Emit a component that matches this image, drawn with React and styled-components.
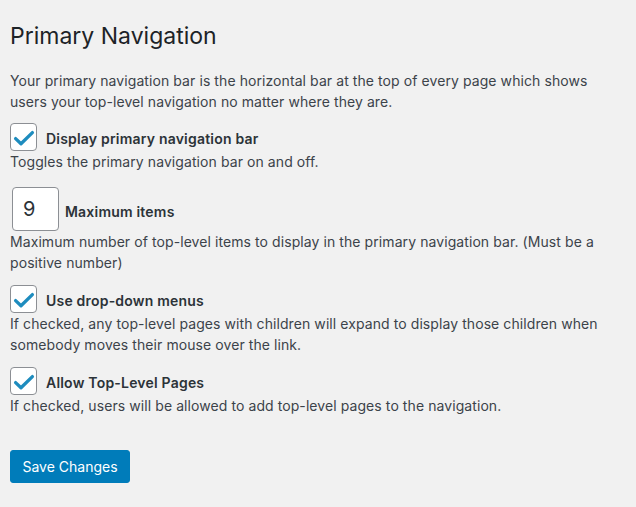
import React from 'react';
import styled, { createGlobalStyle } from 'styled-components';

const GlobalStyle = createGlobalStyle`
    html, body {
        margin: 0;
        padding: 0;
        background: #f1f1f1;
    }
    body {
        font-family: Inter, "Liberation Sans", Arial, sans-serif;
        color: #3c434a;
    }
`;

const settings = [
    {
        type: 'checkbox',
        label: 'Display primary navigation bar',
        description: 'Toggles the primary navigation bar on and off.',
    },
    {
        type: 'number',
        value: 9,
        label: 'Maximum items',
        description: 'Maximum number of top-level items to display in the primary navigation bar. (Must be a positive number)',
    },
    {
        type: 'checkbox',
        label: 'Use drop-down menus',
        description: 'If checked, any top-level pages with children will expand to display those children when somebody moves their mouse over the link.',
    },
    {
        type: 'checkbox',
        label: 'Allow Top-Level Pages',
        description: 'If checked, users will be allowed to add top-level pages to the navigation.',
    },
];

/**
 * Settings page for the primary navigation.
 */
const App = () => (
    <Page>
        <GlobalStyle />
        <Title>Primary Navigation</Title>
        <Intro>
            Your primary navigation bar is the horizontal bar at the top of every page which shows users your
            top-level navigation no matter where they are.
        </Intro>
        {settings.map((setting, index) => (
            <Setting key={setting.label} first={index === 0} spacious={setting.type === 'number'}>
                <Control>
                    {setting.type === 'checkbox' ? (
                        <CheckBox>
                            <svg width="25" height="26" viewBox="0 0 25 26">
                                <path d="M4.6 14.6 L10 19.8 L21.4 8.6" fill="none" stroke="#1e8cbe" strokeWidth="3.3" strokeLinecap="round" strokeLinejoin="round" />
                            </svg>
                        </CheckBox>
                    ) : (
                        <NumberBox>{setting.value}</NumberBox>
                    )}
                    <Label compact={setting.type !== 'checkbox'}>{setting.label}</Label>
                </Control>
                <Description>{setting.description}</Description>
            </Setting>
        ))}
        <SaveButton>Save Changes</SaveButton>
    </Page>
);

const Page = styled.div`
    padding: 20px 10px 20px 10px;
    width: 600px;
`;

const Title = styled.h2`
    margin: 0 0 18px 0;
    font-size: 23px;
    line-height: 32px;
    font-weight: 400;
    color: #1d2327;
`;

const Intro = styled.p`
    margin: 0;
    font-size: 14px;
    line-height: 21px;
    letter-spacing: 0.08px;
`;

const Setting = styled.div`
    margin-top: ${props => (props.first ? '11px' : props.spacious ? '15px' : '12px')};
`;

const Control = styled.div`
    display: flex;
    align-items: center;
`;

const CheckBox = styled.span`
    display: flex;
    box-sizing: border-box;
    width: 27px;
    height: 28px;
    border: 1px solid #8c8f94;
    border-radius: 4px;
    background: #fff;
`;

const NumberBox = styled.span`
    display: flex;
    align-items: center;
    box-sizing: border-box;
    width: 47px;
    height: 44px;
    margin-left: 2px;
    padding-left: 10px;
    border: 1px solid #8c8f94;
    border-radius: 4px;
    background: #fff;
    font-size: 20px;
    color: #2c3338;
`;

const Label = styled.span`
    margin-left: ${props => (props.compact ? '6px' : '9px')};
    padding-top: ${props => (props.compact ? '5px' : '2px')};
    font-size: 14px;
    font-weight: 600;
    letter-spacing: 0.2px;
    color: #2c3338;
`;

const Description = styled.p`
    margin: 0;
    font-size: 14px;
    line-height: 21px;
    letter-spacing: 0.08px;
    color: #3c434a;
`;

const SaveButton = styled.button`
    display: block;
    margin-top: 34px;
    width: 120px;
    height: 33px;
    padding: 0;
    border: 1px solid #007cba;
    border-radius: 3px;
    background: #007cba;
    color: #fff;
    font-family: Inter, "Liberation Sans", Arial, sans-serif;
    font-size: 14px;
    cursor: pointer;
`;

export default App;
